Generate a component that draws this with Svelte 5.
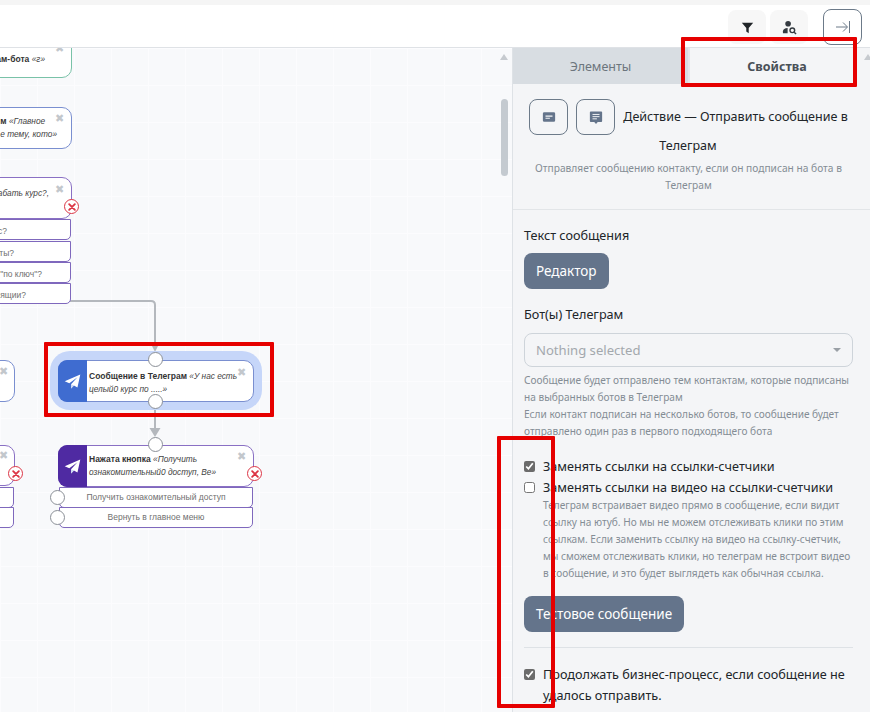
<script>
  const rowsTop = [
    { text: 'с?', top: 171, end: 63 },
    { text: 'сты?', top: 193, end: 56 },
    { text: '"по ключ"?', top: 214, end: 28 },
    { text: 'пящии?', top: 235, end: 44 }
  ];
  const hints = [
    'Телеграм встраивает видео прямо в сообщение, если видит',
    'ссылку на ютуб. Но мы не можем отслеживать клики по этим',
    'ссылкам. Если заменить ссылку на видео на ссылку-счетчик,',
    'мы сможем отслеживать клики, но телеграм не встроит видео',
    'в сообщение, и это будет выглядеть как обычная ссылка.'
  ];
</script>

{#snippet plane()}
  <svg viewBox="0 0 24 24" width="17" height="17"><path d="M23 2 1 11.500l6.500 3L19 6l-9 10v6l4-4.500 5 3z" fill="#fff" /><path d="M10 16v6l4-4.500z" fill="#c9d6f2" /></svg>
{/snippet}

{#snippet cross(x, y)}
  <span class="cross" style="left:{x}px;top:{y}px">✖</span>
{/snippet}

{#snippet fail(x, y)}
  <span class="fail" style="left:{x}px;top:{y}px">
    <svg viewBox="0 0 14 14" width="10" height="10"><path d="M3 3l8 8M11 3l-8 8" stroke="#dc3545" stroke-width="2.600" stroke-linecap="round" /></svg>
  </span>
{/snippet}

<div class="page">
  <div class="strip"></div>
  <header class="toolbar">
    <button class="tool" aria-label="Фильтр">
      <svg viewBox="0 0 16 16" width="13" height="13"><path d="M1 2h14L9.500 8.500V15l-3-2V8.500z" fill="#212529" /></svg>
    </button>
    <button class="tool" aria-label="Поиск контакта">
      <svg viewBox="0 0 16 16" width="15" height="15"><circle cx="6.500" cy="4" r="3" fill="#343a40" /><path d="M1 14v-2c0-2 2-3.500 5-3.500V14z" fill="#343a40" /><circle cx="11" cy="11" r="2.500" fill="none" stroke="#343a40" stroke-width="1.500" /><path d="M13 13l2 2" stroke="#343a40" stroke-width="1.500" /></svg>
    </button>
    <button class="collapse" aria-label="Свернуть">
      <svg viewBox="0 0 16 16" width="16" height="16"><path d="M1 8h11M8 3.500 12.500 8 8 12.500M14.500 2v12" fill="none" stroke="#6c7a89" stroke-width="1" /></svg>
    </button>
  </header>

  <main class="main">
    <section class="canvas">
      <svg class="wires" width="500" height="664">
        <path d="M70 253H151q4 0 4 4V300" fill="none" stroke="#b4b8bd" stroke-width="2" />
        <path d="M151 296h8l-4 8z" fill="#b4b8bd" />
        <path d="M155 362V384" fill="none" stroke="#b4b8bd" stroke-width="2" />
        <path d="M149.500 380h11l-5.500 9z" fill="#b4b8bd" />
      </svg>

      <div class="node green" style="left:-130px;top:-10px;width:202px;height:40px">
        <p class="label right" style="top:14px;right:26px"><b>ам-бота</b> <i>«г»</i></p>
      </div>
      {@render cross(55, -6)}

      <div class="node blue" style="left:-130px;top:59px;width:202px;height:42px">
        <p class="label right" style="top:7px"><b>м</b> <i>«Главное</i><br /><i>е тему, кото»</i></p>
      </div>
      {@render cross(55, 64)}

      <div class="node violet" style="left:-130px;top:129px;width:202px;height:42px">
        <p class="label right" style="top:9px;right:22px"><i>забать курс?,</i></p>
      </div>
      {@render cross(55, 135)}
      {@render fail(64, 151)}

      {#each rowsTop as row}
        <div class="row" style="left:-130px;top:{row.top}px;width:201px"><span class="rowend" style="right:{row.end}px">{row.text}</span></div>
      {/each}

      <div class="node blue" style="left:-180px;top:312px;width:195px;height:42px"></div>
      {@render cross(-1, 317)}

      <div class="halo">
        <div class="node blue card">
          <span class="badge tg">{@render plane()}</span>
          <p class="label"><b>Сообщение в Телеграм</b> <i>«У нас есть целый0 курс по .....»</i></p>
          {@render cross(178, 5)}
        </div>
        <span class="port" style="left:98px;top:1px"></span>
        <span class="port" style="left:98px;top:43px"></span>
      </div>

      <div class="node violet card solo">
        <span class="badge btn">{@render plane()}</span>
        <p class="label"><b>Нажата кнопка</b> <i>«Получить ознакомительный0 доступ, Ве»</i></p>
        {@render cross(178, 4)}
      </div>
      <span class="port" style="left:148px;top:389px"></span>
      {@render fail(247, 418)}
      <div class="row center" style="left:59px;top:439px;width:194px">Получить ознакомительный доступ</div>
      <div class="row center" style="left:59px;top:459px;width:194px">Вернуть в главное меню</div>
      <span class="port" style="left:50px;top:442px"></span>
      <span class="port" style="left:50px;top:462px"></span>

      <div class="node violet" style="left:-180px;top:397px;width:195px;height:41px"></div>
      {@render cross(-1, 401)}
      {@render fail(8, 418)}
      <div class="row" style="left:-180px;top:439px;width:194px"></div>
      <div class="row" style="left:-180px;top:459px;width:194px"></div>

      <span class="bar-up"></span>
      <span class="thumb"></span>
    </section>

    <aside class="side">
      <nav class="tabs">
        <span class="tab">Элементы</span>
        <span class="tab active">Свойства</span>
      </nav>

      <div class="head">
        <div class="title">
          <button class="square" aria-label="Сообщение">
            <svg viewBox="0 0 16 16" width="14" height="14"><path d="M2.500 2.500h11a1.500 1.500 0 0 1 1.500 1.500v8a1.500 1.500 0 0 1-1.500 1.500h-11A1.500 1.500 0 0 1 1 12V4a1.500 1.500 0 0 1 1.500-1.500z" fill="#64748b" /><path d="M4 7h8M4 9.500h5" stroke="#f4f5f7" stroke-width="1.200" /></svg>
          </button>
          <button class="square" aria-label="Комментарий">
            <svg viewBox="0 0 16 16" width="14" height="15"><path d="M2 1h12a1 1 0 0 1 1 1v10a1 1 0 0 1-1 1h-4l-2 2.500L6 13H2a1 1 0 0 1-1-1V2a1 1 0 0 1 1-1z" fill="#64748b" /><path d="M4 4.500h8M4 7h8M4 9.500h5" stroke="#f4f5f7" stroke-width="1.100" /></svg>
          </button>
          <span class="title-first">Действие — Отправить сообщение в</span>
          <span class="title-last">Телеграм</span>
        </div>
        <p class="muted centered">Отправляет сообщению контакту, если он подписан на бота в Телеграм</p>
      </div>

      <div class="form">
        <div class="field-label first">Текст сообщения</div>
        <button class="action">Редактор</button>
        <div class="field-label bot">Бот(ы) Телеграм</div>
        <div class="select">
          <span>Nothing selected</span>
          <i class="caret"></i>
        </div>
        <p class="muted note">Сообщение будет отправлено тем контактам, которые подписаны на выбранных ботов в Телеграм<br />Если контакт подписан на несколько ботов, то сообщение будет отправлено один раз в первого подходящего бота</p>

        <label class="check one"><input type="checkbox" checked /><span>Заменять ссылки на ссылки-счетчики</span></label>
        <label class="check"><input type="checkbox" /><span>Заменять ссылки на видео на ссылки-счетчики</span></label>
        <div class="muted sub">
          {#each hints as line}<div>{line}</div>{/each}
        </div>
        <button class="action test">Тестовое сообщение</button>
        <hr />
        <label class="check long"><input type="checkbox" checked /><span>Продолжать бизнес-процесс, если сообщение не удалось отправить.<br />Используется, если контакт удалил ТГ</span></label>
      </div>
      <span class="side-up"></span>
    </aside>
  </main>

  <div class="mark" style="left:681px;top:37px;width:168px;height:42px"></div>
  <div class="mark" style="left:44px;top:342px;width:222px;height:67px"></div>
  <div class="mark" style="left:497px;top:436px;width:50px;height:264px"></div>
</div>

<style>
  :global(html), :global(body) {
    margin: 0;
    overflow: hidden;
  }
  * {
    box-sizing: border-box;
  }
  .page {
    position: relative;
    width: 870px;
    height: 712px;
    overflow: hidden;
    display: flex;
    flex-direction: column;
    font-family: "Noto Sans", sans-serif;
    background: #fff;
    color: #212529;
  }
  .strip {
    height: 5px;
    flex: none;
    background: #f5f5f5;
  }
  .toolbar {
    height: 43px;
    flex: none;
    display: flex;
    justify-content: flex-end;
    gap: 4px;
    padding: 5px 8px 0 0;
    background: #fff;
    border-bottom: 1px solid #dfe2e6;
  }
  .tool {
    width: 38px;
    height: 34px;
    padding: 0;
    border: none;
    border-radius: 8px;
    background: #f7f7f7;
    display: flex;
    align-items: center;
    justify-content: center;
  }
  .collapse {
    width: 39px;
    height: 36px;
    margin-left: 11px;
    margin-top: -1px;
    padding: 0;
    border: 1px solid #6c7a89;
    border-radius: 8px;
    background: #fff;
    position: relative;
    z-index: 2;
    display: flex;
    align-items: center;
    justify-content: center;
  }
  .main {
    flex: 1;
    display: flex;
    min-height: 0;
  }
  .canvas {
    position: relative;
    width: 512px;
    flex: none;
    overflow: hidden;
    background-color: #f8f9fb;
    background-image:
      linear-gradient(#fcfcfe 1px, transparent 1px),
      linear-gradient(90deg, #fcfcfe 1px, transparent 1px);
    background-size: 37px 37px;
    font-family: "Liberation Sans", sans-serif;
  }
  .wires {
    position: absolute;
    left: 0;
    top: 0;
  }
  .node {
    position: absolute;
    background: #fff;
    border: 1px solid #7a8fd0;
    border-radius: 10px;
  }
  .green {
    border-color: #79c2a8;
  }
  .violet {
    border-color: #8a70c4;
  }
  .label {
    position: absolute;
    margin: 0;
    font-size: 8.500px;
    line-height: 13px;
    color: #444;
  }
  .label b {
    color: #333;
  }
  .label i {
    font-size: 8.300px;
  }
  .label.right {
    right: 14px;
    text-align: left;
  }
  .row {
    position: absolute;
    height: 21px;
    background: #fff;
    border: 1px solid #7f68bd;
    border-radius: 0 0 5px 5px;
    font-size: 8.500px;
    line-height: 19px;
    color: #707070;
  }
  .rowend {
    position: absolute;
    top: 2px;
    white-space: nowrap;
  }
  .center {
    text-align: center;
  }
  .halo {
    position: absolute;
    left: 50px;
    top: 303px;
    width: 212px;
    height: 59px;
    border-radius: 20px;
    background: #c6d6f9;
  }
  .card {
    width: 196px;
    height: 42px;
    display: block;
  }
  .halo .card {
    left: 8px;
    top: 9px;
  }
  .halo .label {
    top: 9px;
  }
  .solo {
    left: 58px;
    top: 397px;
  }
  .solo .label {
    top: 7px;
  }
  .badge {
    position: absolute;
    left: -1px;
    top: -1px;
    bottom: -1px;
    width: 29px;
    border-radius: 9px 0 0 9px;
    display: flex;
    align-items: center;
    justify-content: center;
  }
  .tg {
    background: #3f6cd0;
  }
  .btn {
    background: #4f2aa2;
  }
  .card .label {
    left: 30px;
    right: 10px;
  }
  .cross {
    position: absolute;
    font-size: 11px;
    line-height: 12px;
    color: #c3c7cc;
  }
  .port {
    position: absolute;
    width: 15px;
    height: 15px;
    border-radius: 50%;
    background: #fff;
    border: 1px solid #8b9097;
  }
  .fail {
    position: absolute;
    width: 15px;
    height: 15px;
    border-radius: 50%;
    background: #fff;
    border: 1.500px solid #dc3545;
    display: flex;
    align-items: center;
    justify-content: center;
  }
  .bar-up {
    position: absolute;
    left: 500px;
    top: 6px;
    border-left: 4px solid transparent;
    border-right: 4px solid transparent;
    border-bottom: 6px solid #c6cacf;
  }
  .thumb {
    position: absolute;
    left: 501px;
    top: 51px;
    width: 7px;
    height: 77px;
    border-radius: 4px;
    background: #c4cad0;
  }
  .side {
    position: relative;
    flex: 1;
    background: #f4f5f7;
    border-left: 1px solid #dee2e6;
    overflow: hidden;
    font-size: 12.650px;
  }
  .tabs {
    display: flex;
    height: 36px;
    background: #d8dde2;
  }
  .tab {
    width: 175px;
    line-height: 38px;
    text-align: center;
    color: #6c757d;
    font-size: 12.500px;
  }
  .active {
    flex: 1;
    padding-right: 6px;
    background: #f4f5f7;
    color: #495057;
    font-weight: 700;
    border-left: 2px solid #e4e7ea;
  }
  .side-up {
    position: absolute;
    left: 351px;
    top: 6px;
    border-left: 4px solid transparent;
    border-right: 4px solid transparent;
    border-bottom: 6px solid #c6cacf;
  }
  .head {
    height: 126px;
    padding: 15px 19px 0 13px;
    border-bottom: 1px solid #e2e5e8;
  }
  .title {
    display: flex;
    flex-wrap: wrap;
    justify-content: center;
    align-items: center;
    gap: 0 8px;
    font-size: 12.550px;
  }
  .title-first {
    margin-top: -2px;
  }
  .title-last {
    width: 100%;
    text-align: center;
    line-height: 20px;
    margin-top: 1px;
    margin-left: -1px;
  }
  .square {
    width: 39px;
    height: 36px;
    padding: 0;
    border: 1px solid #6c7a89;
    border-radius: 8px;
    background: transparent;
    display: flex;
    align-items: center;
    justify-content: center;
  }
  .muted {
    margin: 0;
    font-size: 10.100px;
    line-height: 17px;
    color: #848d95;
  }
  .centered {
    text-align: center;
    margin-top: 4px;
    font-size: 10.200px;
  }
  .form {
    padding: 16px 17px 0 11px;
  }
  .field-label {
    line-height: 18px;
  }
  .bot {
    margin-top: 16px;
  }
  .action {
    display: block;
    height: 36px;
    margin-top: 9px;
    padding: 0 12px;
    border: none;
    border-radius: 8px;
    background: #64748b;
    color: #fff;
    font-family: inherit;
    font-size: 13.500px;
  }
  .select {
    height: 34px;
    margin-top: 10px;
    padding: 0 11px;
    display: flex;
    align-items: center;
    justify-content: space-between;
    border: 1px solid #ced4da;
    border-radius: 8px;
    color: #a3a8ad;
    font-size: 13.100px;
  }
  .caret {
    border-left: 4px solid transparent;
    border-right: 4px solid transparent;
    border-top: 4px solid #9aa0a6;
  }
  .note {
    margin-top: 5px;
  }
  .check {
    display: flex;
    gap: 8px;
    line-height: 21px;
  }
  .one {
    margin-top: 16px;
  }
  .check input {
    width: 11px;
    height: 11px;
    margin: 5px 0 0;
    flex: none;
    accent-color: #6b6b6b;
  }
  .sub {
    padding-left: 19px;
    margin-top: -1px;
    white-space: nowrap;
  }
  .test {
    margin-top: 14px;
  }
  hr {
    margin: 15px 0 16px;
    border: none;
    border-top: 1px solid #dee2e6;
  }
  .mark {
    position: absolute;
    box-sizing: content-box;
    border: 4px solid #e60000;
    border-radius: 1px;
    z-index: 5;
  }
</style>
